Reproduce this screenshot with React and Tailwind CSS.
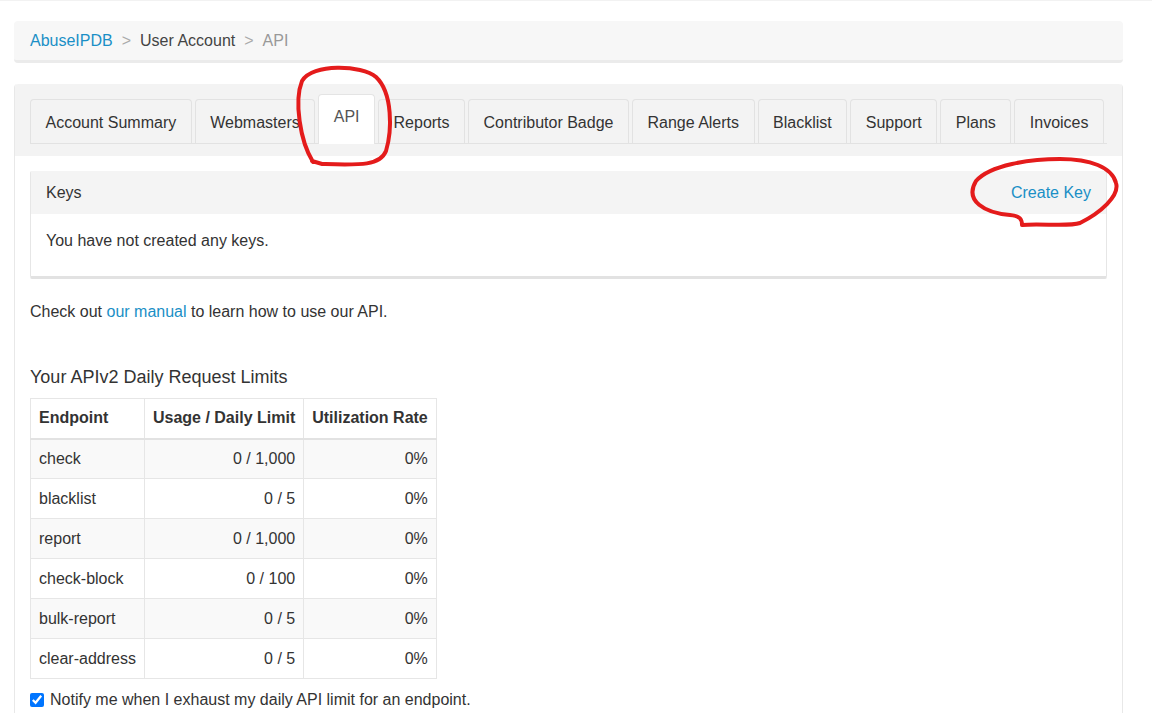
import { useState } from 'react'

const tabs = [
  'Account Summary',
  'Webmasters',
  'API',
  'Reports',
  'Contributor Badge',
  'Range Alerts',
  'Blacklist',
  'Support',
  'Plans',
  'Invoices',
]

const limits = [
  { endpoint: 'check', usage: '0 / 1,000', rate: '0%' },
  { endpoint: 'blacklist', usage: '0 / 5', rate: '0%' },
  { endpoint: 'report', usage: '0 / 1,000', rate: '0%' },
  { endpoint: 'check-block', usage: '0 / 100', rate: '0%' },
  { endpoint: 'bulk-report', usage: '0 / 5', rate: '0%' },
  { endpoint: 'clear-address', usage: '0 / 5', rate: '0%' },
]

function Annotations() {
  // hand-drawn red circles over the API tab and the Create Key link
  return (
    <svg className="absolute left-0 top-0 pointer-events-none" width="1152" height="713">
      <path
        d="M313,161 C300,140 294,100 302,80 C312,62 362,64 376,76 C393,92 392,130 386,150 C380,165 360,164 322,163 L312,160"
        fill="none"
        stroke="#e41b1b"
        strokeWidth="4"
        strokeLinecap="round"
      />
      <path
        d="M1022,224 C1040,222 1068,226 1080,222 C1100,212 1120,195 1116,182 C1112,166 1090,158 1060,158 C1030,158 990,164 976,180 C964,200 985,212 1010,214 C1020,215 1022,218 1022,224"
        fill="none"
        stroke="#e41b1b"
        strokeWidth="4"
        strokeLinecap="round"
      />
    </svg>
  )
}

export default function App() {
  const [notify, setNotify] = useState(true)

  return (
    <div
      className="relative h-[713px] overflow-hidden bg-white text-[16px] text-[#333] border-t border-[#f2f2f2]"
      style={{ fontFamily: '"Liberation Sans", Arial, sans-serif' }}
    >
      <div className="w-[1109px] ml-[14px] pt-[20px]">
        {/* breadcrumb */}
        <div className="h-[42px] flex items-center px-[16px] bg-[#f7f7f7] rounded-[4px] border-b-[3px] border-[#ebebeb]">
          <a className="text-[#1a8fc6]">AbuseIPDB</a>
          <span className="text-[#aaa] px-[9px]">&gt;</span>
          <span className="text-[#444]">User Account</span>
          <span className="text-[#aaa] px-[9px]">&gt;</span>
          <span className="text-[#999]">API</span>
        </div>

        {/* main panel */}
        <div className="mt-[21px] rounded-t-[4px] border-x border-[#e8e8e8]">
          <div className="bg-[#f3f3f3] px-[15px] pt-[10px] pb-[12px] rounded-t-[4px]">
            <div className="flex items-end gap-[3px] border-b border-[#e2e2e2]">
              {tabs.map((t) =>
                t === 'API' ? (
                  <div
                    key={t}
                    className="shrink-0 whitespace-nowrap h-[50px] px-[14.5px] pb-[6px] flex items-center bg-white border border-b-0 border-[#e4e4e4] rounded-t-[4px] text-[#555] -mb-px"
                  >
                    {t}
                  </div>
                ) : (
                  <div
                    key={t}
                    className="shrink-0 whitespace-nowrap h-[44px] px-[14.5px] pt-[2px] flex items-center border border-b-0 border-[#e2e2e2] rounded-t-[4px] text-[#333]"
                  >
                    {t}
                  </div>
                )
              )}
            </div>
          </div>

          <div className="bg-white px-[15px] pt-[15px]">
            {/* keys panel */}
            <div className="border-x border-[#e6e6e6] border-b-[3px] border-b-[#e2e2e2] rounded-[2px]">
              <div className="h-[43px] bg-[#f4f4f4] flex items-center justify-between px-[15px]">
                <span>Keys</span>
                <a className="text-[#1a8fc6]">Create Key</a>
              </div>
              <div className="px-[15px] pt-[16px] pb-[24px] leading-[22px]">
                You have not created any keys.
              </div>
            </div>

            <p className="mt-[22px] leading-[22px]">
              Check out <a className="text-[#1a8fc6]">our manual</a> to learn how to use our API.
            </p>

            <h3 className="mt-[41px] text-[18px] leading-[26px] text-[#333]">
              Your APIv2 Daily Request Limits
            </h3>

            <table className="mt-[8px] border-collapse border border-[#e6e6e6] whitespace-nowrap">
              <thead>
                <tr className="h-[40px] border-b-2 border-[#e2e2e2]">
                  <th className="w-[112px] px-[8px] text-left font-bold border border-[#e6e6e6]">Endpoint</th>
                  <th className="w-[159px] px-[8px] text-left font-bold border border-[#e6e6e6]">Usage / Daily Limit</th>
                  <th className="w-[131px] px-[8px] text-left font-bold border border-[#e6e6e6]">Utilization Rate</th>
                </tr>
              </thead>
              <tbody>
                {limits.map((r, i) => (
                  <tr key={r.endpoint} className={i % 2 === 0 ? 'h-[40px] bg-[#f9f9f9]' : 'h-[40px] bg-white'}>
                    <td className="px-[8px] border border-[#e6e6e6]">{r.endpoint}</td>
                    <td className="px-[8px] text-right border border-[#e6e6e6]">{r.usage}</td>
                    <td className="px-[8px] text-right border border-[#e6e6e6]">{r.rate}</td>
                  </tr>
                ))}
              </tbody>
            </table>

            <label className="mt-[10px] flex items-center gap-[6px] leading-[22px] whitespace-nowrap">
              <input
                type="checkbox"
                checked={notify}
                onChange={() => setNotify(!notify)}
                className="w-[14px] h-[14px] m-0 accent-[#0075ff]"
              />
              Notify me when I exhaust my daily API limit for an endpoint.
            </label>
            <div className="h-[20px]" />
          </div>
        </div>
      </div>
      <Annotations />
    </div>
  )
}
